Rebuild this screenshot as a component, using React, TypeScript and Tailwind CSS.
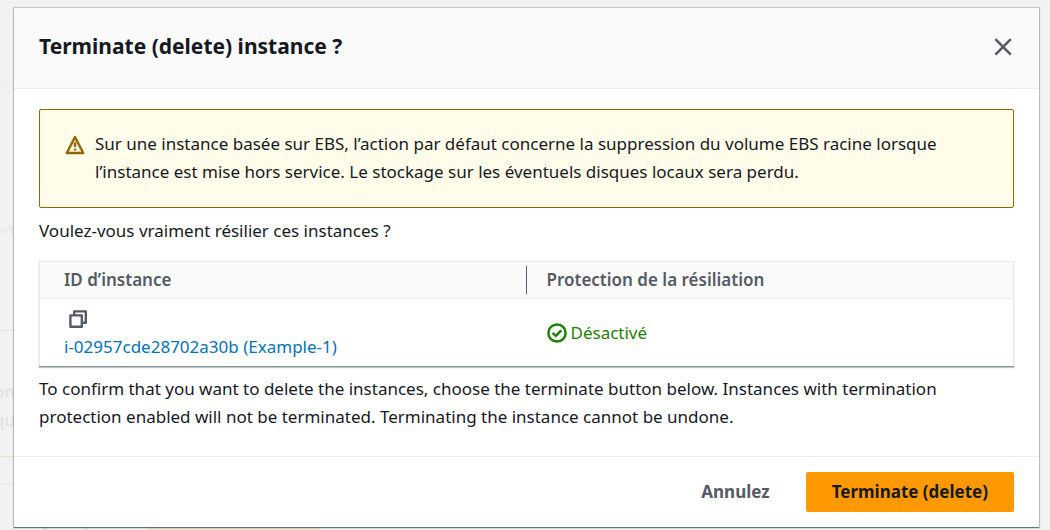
import type { ReactNode } from 'react';

function WarningIcon() {
  return (
    <svg viewBox="0 0 20 20" className="size-5 shrink-0" fill="none" stroke="#906806" strokeWidth="2.5" aria-hidden="true">
      <path d="M10 2 L18.2 18 H1.8 Z" strokeLinejoin="round" />
      <path d="M10 7.2 V12 M10 13.4 V15.6" />
    </svg>
  );
}

function CopyIcon() {
  return (
    <svg viewBox="0 0 20 20" className="size-5" fill="none" stroke="#545b64" strokeWidth="2.4" strokeLinejoin="round" aria-hidden="true">
      <path d="M2.4 6.4 H13.8 V17.8 H2.4 Z" />
      <path d="M6.2 6 V2.4 H17.8 V13.8 H14" />
    </svg>
  );
}

function CheckIcon() {
  return (
    <svg viewBox="0 0 20 20" className="size-5 shrink-0" fill="none" stroke="#1d8102" strokeWidth="2.5" aria-hidden="true">
      <circle cx="10" cy="10" r="8.6" />
      <path d="M5.6 9.8 L8.8 12.8 L14.2 7.4" />
    </svg>
  );
}

function CloseIcon() {
  return (
    <svg viewBox="0 0 20 20" className="size-5" fill="none" stroke="#545b64" strokeWidth="2.6" aria-hidden="true">
      <path d="M1.4 2.2 L16.8 17.6 M16.8 2.2 L1.4 17.6" />
    </svg>
  );
}

function Backdrop() {
  return (
    <div aria-hidden="true" className="absolute inset-0 flex flex-col overflow-hidden bg-[#f1f3f3] leading-7 text-[#dfe1e3]">
      <div className="mt-0.5 h-20 w-80 shrink-0 border-y border-r border-[#eceeee]" />
      <div className="flex h-[248px] w-80 shrink-0 items-end pb-[86px] text-[#e6e8e9]">
        <span className="-ml-1.5">em</span>
      </div>
      <div className="h-[127px] w-80 shrink-0 border-y border-[#e8e3cf] bg-[#f2f2f0] pt-[47px]">
        <div className="-ml-1.5">on</div>
        <div className="-ml-1.5">qu</div>
      </div>
      <div className="mt-[26px] flex w-80 shrink-0 justify-end gap-10 border-t border-[#e8eaea] pt-[30px]">
        <div className="flex h-10 items-center font-bold">Annulez</div>
        <div className="h-10 w-[173px] bg-[#eee5d2]" />
      </div>
    </div>
  );
}

function Alert({ children }: { children: ReactNode }) {
  return (
    <div role="alert" className="flex gap-2.5 rounded-xs border border-[#906806] bg-[#fffce9] pt-5 pr-16 pb-[21px] pl-[25px]">
      <span className="flex h-7 items-center pt-0.5">
        <WarningIcon />
      </span>
      <p>{children}</p>
    </div>
  );
}

function InstanceTable() {
  return (
    <table className="mt-4 w-full table-fixed border border-[#e3e8e8] border-b-[#879596] text-left shadow-[0_1px_1px_0_rgba(0,28,36,0.25)]">
      <thead className="bg-[#fafafa] text-[#545b64]">
        <tr className="border-b border-[#eaeded]">
          <th scope="col" className="py-1 pl-6 font-semibold">
            <div className="flex h-7 items-center border-r border-[#545b64]">ID d’instance</div>
          </th>
          <th scope="col" className="py-1 pl-5 font-semibold">Protection de la résiliation</th>
        </tr>
      </thead>
      <tbody className="bg-white">
        <tr>
          <td className="pt-1.5 pb-[5px] pl-6">
            <button type="button" aria-label="Copy" className="ml-1 flex h-7 items-center">
              <CopyIcon />
            </button>
            <a href="#instance" className="block text-[#0073bb]">i-02957cde28702a30b (Example-1)</a>
          </td>
          <td className="pl-5">
            <span className="flex items-center gap-1 text-[#1d8102]">
              <CheckIcon />
              Désactivé
            </span>
          </td>
        </tr>
      </tbody>
    </table>
  );
}

export default function App() {
  return (
    <div className="relative min-h-screen overflow-hidden pt-2 pr-[11px] pl-3.5 font-['Noto_Sans',sans-serif] text-[17px] leading-7 text-[#16191f]">
      <Backdrop />
      <div
        role="dialog"
        aria-modal="true"
        aria-labelledby="dialog-title"
        className="relative bg-white shadow-[0_1px_1px_0_rgba(0,28,36,0.5),0_0_1px_1px_rgba(0,28,36,0.18)]"
      >
        <header className="flex items-start justify-between border-b border-[#eaeded] bg-[#fafafa] px-[25px] pt-6 pb-7">
          <h1 id="dialog-title" className="text-[21px] font-bold">Terminate (delete) instance ?</h1>
          <button type="button" aria-label="Close" className="flex h-7 items-center pt-0.5">
            <CloseIcon />
          </button>
        </header>
        <main className="px-[25px] pt-5 pb-[25px]">
          <Alert>
            Sur une instance basée sur EBS, l’action par défaut concerne la suppression du volume EBS racine lorsque
            <br />
            l’instance est mise hors service. Le stockage sur les éventuels disques locaux sera perdu.
          </Alert>
          <p className="mt-[9px]">Voulez-vous vraiment résilier ces instances ?</p>
          <InstanceTable />
          <p className="mt-2">
            To confirm that you want to delete the instances, choose the terminate button below. Instances with termination
            <br />
            protection enabled will not be terminated. Terminating the instance cannot be undone.
          </p>
        </main>
        <footer className="flex justify-end gap-2.5 border-t border-[#eaeded] px-[25px] py-[15px]">
          <button type="button" className="h-10 px-[26px] font-bold text-[#545b64]">Annulez</button>
          <button type="button" className="h-10 rounded-xs bg-[#ff9900] px-[26px] font-bold">Terminate (delete)</button>
        </footer>
      </div>
    </div>
  );
}
